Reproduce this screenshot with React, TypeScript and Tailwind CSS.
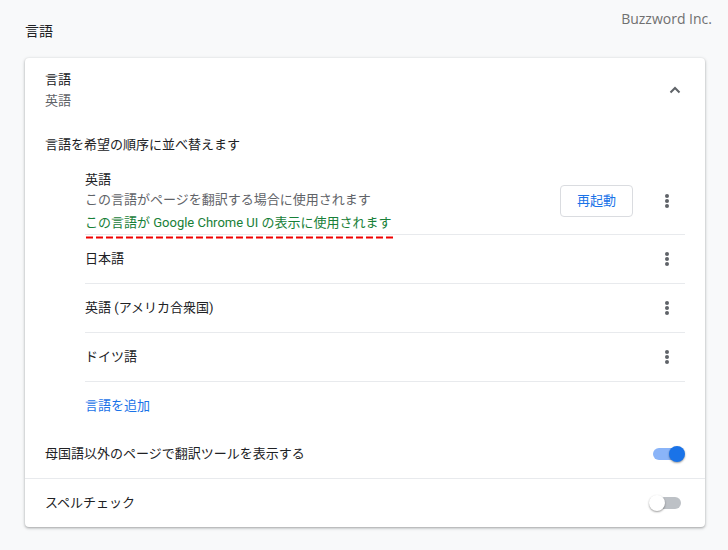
import React from 'react';

const font = { fontFamily: 'Roboto, "Noto Sans CJK JP", sans-serif' };

const Kebab: React.FC = () => (
  <div className="w-[36px] h-[36px] flex flex-col items-center justify-center gap-[1.5px]">
    <span className="w-[3.5px] h-[3.5px] rounded-full bg-[#5f6368]" />
    <span className="w-[3.5px] h-[3.5px] rounded-full bg-[#5f6368]" />
    <span className="w-[3.5px] h-[3.5px] rounded-full bg-[#5f6368]" />
  </div>
);

const Toggle: React.FC<{ on: boolean }> = ({ on }) => (
  <div className="relative w-[34px] h-[16px]">
    <div
      className={`absolute left-[2px] right-[2px] top-[2px] h-[12px] rounded-full ${
        on ? 'bg-[#8ab4f8]' : 'bg-[#bdc1c6]'
      }`}
    />
    <div
      className={`absolute top-0 w-[16px] h-[16px] rounded-full shadow-[0_1px_2px_rgba(0,0,0,0.4)] ${
        on ? 'right-0 bg-[#1a73e8]' : 'left-0 bg-white'
      }`}
    />
  </div>
);

const rows = ['日本語', '英語 (アメリカ合衆国)', 'ドイツ語'];

export default function App() {
  return (
    <div className="w-[728px] h-[550px] bg-[#f8f9fa] text-[13px] text-[#202124] relative" style={font}>
      <div
        className="absolute right-[16px] top-[8px] text-[14px] text-[#707070]"
        style={{ fontFamily: '"Open Sans", sans-serif' }}
      >
        Buzzword Inc.
      </div>

      <div className="px-[25px] pt-[21px]">
        <h2 className="text-[14px] leading-[20px] font-normal">言語</h2>

        <div className="mt-[17px] w-[680px] bg-white rounded-[4px] shadow-[0_1px_2px_rgba(60,64,67,0.3),0_1px_3px_1px_rgba(60,64,67,0.15)]">
          <div className="h-[64px] flex items-center justify-between pl-[20px] pr-[20px]">
            <div className="leading-[21px]">
              <div>言語</div>
              <div className="text-[#5f6368]">英語</div>
            </div>
            <svg width="20" height="20" viewBox="0 0 20 20">
              <polyline points="5.5,12.5 10,8 14.5,12.5" fill="none" stroke="#5f6368" strokeWidth="2" />
            </svg>
          </div>

          <div className="h-[46px] flex items-center px-[20px]">言語を希望の順序に並べ替えます</div>

          <div className="pl-[60px] pr-[20px]">
            <div className="relative h-[66px] flex items-center">
              <div className="flex-1 leading-[20px]">
                <div>英語</div>
                <div className="text-[#5f6368]">この言語がページを翻訳する場合に使用されます</div>
                <div className="mt-[3px] text-[#188038]">この言語が Google Chrome UI の表示に使用されます</div>
              </div>
              <button className="h-[32px] px-[16px] border border-[#dadce0] rounded-[4px] text-[#1a73e8] bg-white mr-[16px]">
                再起動
              </button>
              <Kebab />
              <svg className="absolute left-0 top-[68px]" width="308" height="3">
                <line x1="1" y1="1.5" x2="308" y2="1.5" stroke="#f00000" strokeWidth="2" strokeDasharray="7 3" />
              </svg>
            </div>

            {rows.map((r) => (
              <div key={r} className="h-[49px] border-t border-[#e8eaed] flex items-center justify-between">
                <span>{r}</span>
                <Kebab />
              </div>
            ))}

            <div className="h-[49px] border-t border-[#e8eaed] flex items-center text-[#1a73e8]">言語を追加</div>
          </div>

          <div className="h-[48px] flex items-center justify-between px-[20px]">
            <span>母国語以外のページで翻訳ツールを表示する</span>
            <Toggle on />
          </div>
          <div className="h-[49px] border-t border-[#e8eaed] flex items-center justify-between pl-[20px] pr-[22px]">
            <span>スペルチェック</span>
            <Toggle on={false} />
          </div>
        </div>
      </div>
    </div>
  );
}
